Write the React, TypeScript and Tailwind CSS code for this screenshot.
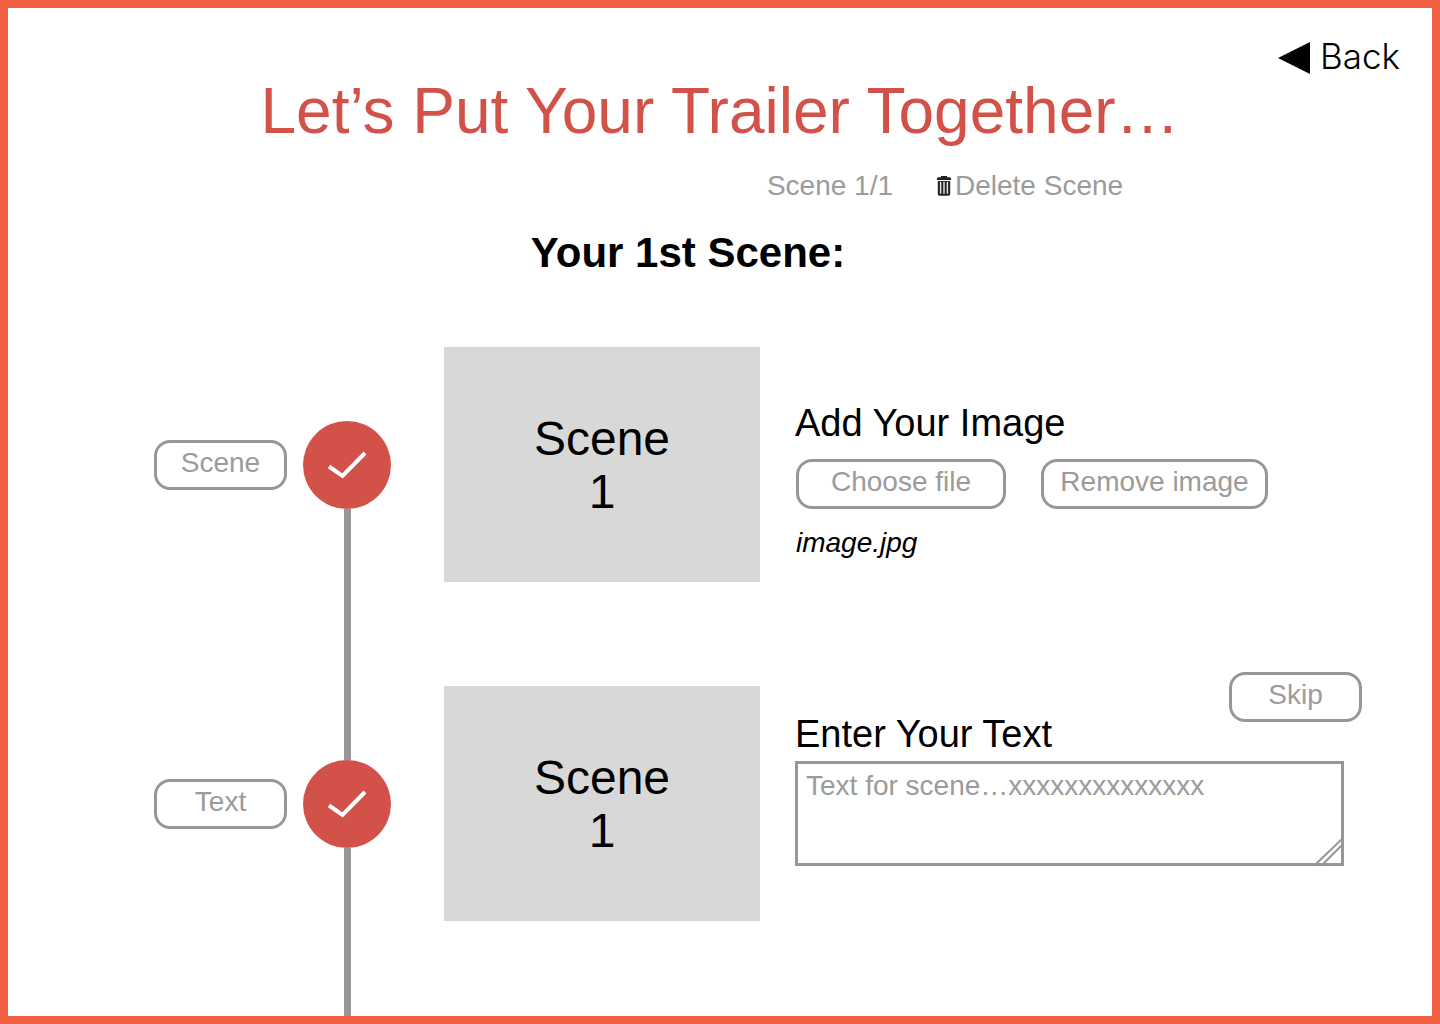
import type { ReactNode } from 'react';

function OutlineButton({ children, className }: { children: ReactNode; className: string }) {
  return (
    <button
      type="button"
      className={`h-[50px] shrink-0 rounded-2xl border-[3px] border-[#979797] bg-white pb-1 text-center text-[28px] leading-[38px] whitespace-nowrap text-[#9b9b9b] ${className}`}
    >
      {children}
    </button>
  );
}

function TrashIcon() {
  return (
    <svg viewBox="0 0 16 22" className="h-[22px] w-4" aria-hidden="true">
      <path d="M5 1h6v2H5z" fill="#222" />
      <path d="M.8 4.900v-1Q.8 2.300 2.600 2.300h10.800Q15.200 2.300 15.200 3.900v1z" fill="#222" />
      <path d="M1.800 5.900h12.400v13q0 1.800-1.800 1.800H3.600q-1.800 0-1.800-1.800z" fill="#222" />
      <path d="M4.600 6.800v12M8 6.800v12M11.400 6.800v12" stroke="#e8e8e8" strokeWidth="1.4" />
    </svg>
  );
}

function StepMarker() {
  return (
    <div className="flex size-[88px] shrink-0 items-center justify-center rounded-full bg-[#d2524a]">
      <svg viewBox="0 0 40 28" className="h-7 w-10" aria-hidden="true">
        <path d="M2 15.500 15.500 25 38 2" fill="none" stroke="#fff" strokeWidth="4" />
      </svg>
    </div>
  );
}

function SceneRow({
  label,
  first = false,
  children,
}: {
  label: string;
  first?: boolean;
  children: ReactNode;
}) {
  return (
    <section
      className={`flex pr-[70px] pl-[146px] ${first ? 'min-h-[339px]' : 'min-h-[330px] grow'}`}
    >
      <div className="mr-4 flex h-[235px] items-center">
        <OutlineButton className="w-[133px]">{label}</OutlineButton>
      </div>
      <div className="mr-[53px] flex flex-col items-center">
        <div className={`h-[74px] w-[7px] shrink-0 ${first ? '' : 'bg-[#979797]'}`} />
        <StepMarker />
        <div className="w-[7px] grow bg-[#979797]" />
      </div>
      <div className="mr-[35px] flex h-[235px] w-[316px] shrink-0 items-center justify-center bg-[#d8d8d8] text-center text-5xl leading-[53px]">
        <p>
          Scene
          <br />1
        </p>
      </div>
      <div className="min-w-0 grow">{children}</div>
    </section>
  );
}

export default function App() {
  return (
    <main className="flex min-h-screen flex-col border-8 border-[#f16041] bg-white font-['Liberation_Sans',Arial,sans-serif] text-black">
      <nav className="flex justify-end pt-[34px] pr-8">
        <a
          href="#back"
          className="flex h-8 items-center gap-2.5 font-['Inter',sans-serif] text-[35px] leading-8 font-light"
        >
          <svg viewBox="0 0 32 32" className="size-8" aria-hidden="true">
            <path d="M32 0v32L0 16z" />
          </svg>
          <span className="pb-1">Back</span>
        </a>
      </nav>

      <header className="flex flex-col">
        <h1 className="text-center text-[64px] leading-[74px] text-[#d2524a]">
          Let’s Put Your Trailer Together…
        </h1>
        <div className="mt-[22px] flex justify-center gap-[43px] pl-[450px] text-[28px] leading-8 text-[#9b9b9b]">
          <p>Scene 1/1</p>
          <button type="button" className="flex items-center gap-[3px]">
            <TrashIcon />
            Delete Scene
          </button>
        </div>
        <h2 className="mt-[27px] pr-16 text-center text-[42px] leading-[48px] font-bold">
          Your 1st Scene:
        </h2>
      </header>

      <div className="mt-[70px] flex grow flex-col">
        <SceneRow label="Scene" first>
          <h3 className="pt-[54px] text-[38px] leading-[44px]">Add Your Image</h3>
          <div className="mt-3.5 flex gap-[35px] pl-px">
            <OutlineButton className="w-[210px]">Choose file</OutlineButton>
            <OutlineButton className="w-[227px]">Remove image</OutlineButton>
          </div>
          <p className="mt-[18px] pl-px text-[28px] leading-8 italic">image.jpg</p>
        </SceneRow>

        <SceneRow label="Text">
          <div className="-mt-3.5 flex justify-between">
            <label htmlFor="scene-text" className="pt-10 text-[38px] leading-[44px]">
              Enter Your Text
            </label>
            <OutlineButton className="w-[133px]">Skip</OutlineButton>
          </div>
          <div className="relative mt-[5px] mr-[18px]">
            <textarea
              id="scene-text"
              defaultValue="Text for scene…xxxxxxxxxxxxxx"
              className="block h-[105px] w-full resize-none overflow-hidden border-[3px] border-[#979797] px-2 py-1.5 text-[28px] leading-8 text-[#9b9b9b] outline-none"
            />
            <svg
              viewBox="0 0 28 28"
              className="pointer-events-none absolute right-0 bottom-0 size-7"
              aria-hidden="true"
            >
              <path d="M0 26 27 0M6 27 28 5" stroke="#979797" strokeWidth="2" />
            </svg>
          </div>
        </SceneRow>
      </div>
    </main>
  );
}
